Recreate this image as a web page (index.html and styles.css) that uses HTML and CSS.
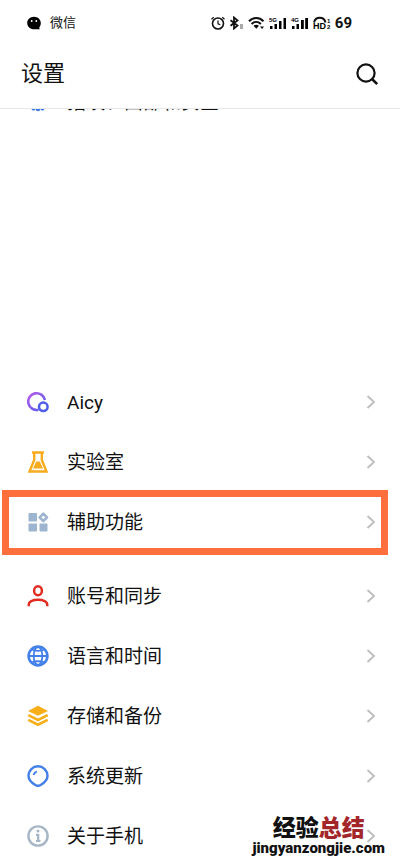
FILE: index.html
```html
<!DOCTYPE html>
<html lang="zh-CN">
<head>
<meta charset="utf-8">
<meta name="viewport" content="width=device-width, initial-scale=1">
<title>设置</title>
<link rel="stylesheet" href="styles.css">
</head>
<body>
<svg class="defs" aria-hidden="true">
  <symbol id="chevron" viewBox="0 0 10 14"><path d="M1.500 1l6.500 6-6.500 6" fill="none" stroke="#bdbdbd" stroke-width="1.800"/></symbol>
</svg>
<div class="status">
  <svg class="wechat" viewBox="0 0 14 14" aria-hidden="true"><path d="M7 .8C3.200.8.2 3.600.2 7c0 2 1 3.800 2.500 4.900C4 12.800 5.500 13.200 7 13.200h5.800l-.6-1.800C13.300 10.300 13.800 8.700 13.800 7 13.800 3.600 10.800.8 7 .8z"/><circle cx="4.700" cy="5" r=".9" fill="#fff"/><circle cx="9.300" cy="5" r=".9" fill="#fff"/></svg>
  <span class="app">微信</span>
  <div class="indicators">
    <svg width="14" height="14" viewBox="0 0 14 14" fill="none" stroke="#111" aria-hidden="true"><circle cx="7" cy="7.500" r="5.500" stroke-width="1.600"/><path d="M7 4.500v3.300l2.300.9M.5 3.200l2.200-2M13.500 3.200l-2.200-2" stroke-width="1.200"/></svg>
    <svg width="15" height="14" viewBox="0 0 15 14" fill="none" stroke="#111" aria-hidden="true"><path d="M1.500 4.200l7 5.400L5 12.500v-11l3.500 2.900-7 5.400" stroke-width="1.800"/><path d="M12.500 8v5" stroke="#aaa" stroke-width="3"/></svg>
    <svg width="17" height="14" viewBox="0 0 17 14" fill="none" stroke="#111" aria-hidden="true"><path d="M1 5.200c4.200-4.200 10.300-4.200 14.500 0M3.600 8c2.800-2.700 6.500-2.700 9.300 0" stroke-width="2"/><path d="M5.500 9.800c1.800-1.300 3.700-1.300 5.500 0l-2.700 3z" fill="#111" stroke="none"/><path d="M12 10.500h4l-2 2.500z" fill="#111" stroke="none"/></svg>
    <svg width="18" height="14" viewBox="0 0 18 14" aria-hidden="true"><path d="M1 10h2.500v3H1zM5.500 8H8v5H5.500zM10 5h2.500v8H10zM14.500 2H17v11h-2.500z"/><text class="net" x="0" y="6">5G</text></svg>
    <svg width="18" height="14" viewBox="0 0 18 14" aria-hidden="true"><path d="M1 10h2.500v3H1zM5.500 8H8v5H5.500zM10 4h2.800v9H10zM14.200 2H17v11h-2.800z"/><text class="net" x="0" y="6">4G</text></svg>
    <svg width="18" height="14" viewBox="0 0 18 14" aria-hidden="true"><path d="M1 6.500C2.500.3 11 .3 12.500 6.500" fill="none" stroke="#111" stroke-width="2"/><text class="hd" x="0" y="13">HD</text><text class="sim" x="14" y="7">1</text><text class="sim" x="14" y="13">2</text></svg>
    <span class="battery">69</span>
  </div>
</div>
<header class="header">
  <h1>设置</h1>
  <button class="search" aria-label="搜索"><svg viewBox="0 0 24 24" fill="none" stroke="#111" aria-hidden="true"><circle cx="11" cy="11" r="8.600" stroke-width="2.200"/><path d="M17 17l5.200 5.200" stroke-width="2.600"/></svg></button>
</header>
<main class="list">
  <a class="row clipped" href="#"><svg class="icon" viewBox="0 0 22 22" fill="#3d7bec" aria-hidden="true"><circle cx="11" cy="9" r="6"/><circle cx="6.500" cy="17.500" r="2"/><circle cx="11" cy="18" r="2.300"/><circle cx="15.500" cy="17.500" r="2"/></svg><span class="label">指纹、面部和安全</span></a>
  <section class="group spaced">
    <a class="row" href="#">
      <svg class="icon" viewBox="0 0 22 22" fill="none" aria-hidden="true"><defs><linearGradient id="aicy" x1="0" y1="0" x2="1" y2="1"><stop offset="0" stop-color="#b65be8"/><stop offset="1" stop-color="#5360ee"/></linearGradient></defs><path d="M17.900 9A8.400 8.400 0 1 0 11.500 18.800" stroke="url(#aicy)" stroke-width="2.600"/><circle cx="16.300" cy="15.800" r="4.300" stroke="#4d5dea" stroke-width="2.500"/></svg>
      <span class="label">Aicy</span><svg class="chevron" aria-hidden="true"><use href="#chevron"/></svg>
    </a>
    <a class="row" href="#">
      <svg class="icon" viewBox="0 0 22 22" aria-hidden="true"><path d="M5 1.500h12M7.200 2v7L2.500 20.500h17L14.800 9V2" fill="none" stroke="#f7ab1d" stroke-width="2.400"/><path d="M9.200 10.500h3.600L16 17.500H6z" fill="#f7ab1d"/></svg>
      <span class="label">实验室</span><svg class="chevron" aria-hidden="true"><use href="#chevron"/></svg>
    </a>
    <a class="row highlighted" href="#">
      <svg class="icon" viewBox="0 0 22 22" fill="#9eb5d0" aria-hidden="true"><rect x="1.500" y="2" width="8.500" height="8.500" rx=".8"/><rect x="1.500" y="12.500" width="8.500" height="8" rx=".8"/><rect x="12.500" y="12.500" width="8" height="8" rx=".8"/><path d="M16.300 2.600l3.700 3.700-3.700 3.700-3.700-3.700z" fill="none" stroke="#9eb5d0" stroke-width="2.600" stroke-linejoin="round"/></svg>
      <span class="label">辅助功能</span><svg class="chevron" aria-hidden="true"><use href="#chevron"/></svg>
    </a>
  </section>
  <section class="group">
    <a class="row" href="#">
      <svg class="icon" viewBox="0 0 22 22" fill="none" stroke="#e22b21" stroke-width="2.500" aria-hidden="true"><ellipse cx="11" cy="5.800" rx="3.900" ry="4.500"/><path d="M1.800 21.200v-1.700c0-2.700 3.700-4.700 9.200-4.700s9.200 2 9.200 4.700v1.700"/></svg>
      <span class="label">账号和同步</span><svg class="chevron" aria-hidden="true"><use href="#chevron"/></svg>
    </a>
    <a class="row" href="#">
      <svg class="icon" viewBox="0 0 22 22" fill="none" stroke="#4380e9" stroke-width="1.800" aria-hidden="true"><circle cx="11" cy="11" r="9.400" stroke-width="2.600"/><ellipse cx="11" cy="11" rx="4.300" ry="9"/><path d="M2 11h18M4.500 4.500c3.500 1.700 9.500 1.700 13 0M4.500 17.500c3.500-1.700 9.500-1.700 13 0"/></svg>
      <span class="label">语言和时间</span><svg class="chevron" aria-hidden="true"><use href="#chevron"/></svg>
    </a>
    <a class="row" href="#">
      <svg class="icon" viewBox="0 0 22 22" aria-hidden="true"><path d="M11 .8l10 5.200-10 4.700L1 6z" fill="#f8ae16"/><path d="M1.300 10.200L11 15l9.700-4.800M1.300 14.900L11 19.700l9.700-4.800" fill="none" stroke="#f8ae16" stroke-width="2.600"/></svg>
      <span class="label">存储和备份</span><svg class="chevron" aria-hidden="true"><use href="#chevron"/></svg>
    </a>
    <a class="row" href="#">
      <svg class="icon" viewBox="0 0 22 22" fill="none" stroke="#4380e9" stroke-width="2.400" aria-hidden="true"><path d="M11 1.300a9.500 9.500 0 0 1 9.500 9.400c0 4-3 7-6.900 9.300-1.800 1.100-3.400 1.100-5.200 0C4.500 17.700 1.500 14.700 1.500 10.700A9.500 9.500 0 0 1 11 1.300z"/><path d="M6.500 10c.7-1.800 1.700-2.800 3.300-3.600" stroke-width="2"/></svg>
      <span class="label">系统更新</span><svg class="chevron" aria-hidden="true"><use href="#chevron"/></svg>
    </a>
    <a class="row" href="#">
      <svg class="icon" viewBox="0 0 22 22" fill="none" stroke="#a6b6c6" aria-hidden="true"><circle cx="11" cy="11" r="9.600" stroke-width="2.400"/><path d="M11.200 9v7.300M9 9.800h2M9 16h4.500" stroke-width="2.200"/><circle cx="11" cy="6" r="1.500" fill="#a6b6c6" stroke="none"/></svg>
      <span class="label">关于手机</span><svg class="chevron" aria-hidden="true"><use href="#chevron"/></svg>
    </a>
  </section>
</main>
<div class="watermark">
  <div class="brand">经验<span class="red">总结</span></div>
  <div class="site">jingyanzongjie.com</div>
</div>
</body>
</html>
```
FILE: styles.css
```css
* { box-sizing: border-box; }

body {
  position: relative;
  margin: 0;
  min-height: 100vh;
  background: #fff;
  color: #111;
  font-family: Roboto, "Noto Sans CJK SC", sans-serif;
}

.defs { position: absolute; width: 0; height: 0; }

.status {
  display: flex;
  align-items: center;
  height: 45px;
  padding: 0 48px 0 27px;
  gap: 9px;
}

.wechat { width: 14px; height: 14px; }
.app { font-size: 13px; line-height: 20px; }

.indicators {
  display: flex;
  align-items: center;
  gap: 4px;
  margin-left: auto;
}

.battery { font-size: 15px; line-height: 20px; font-weight: 700; }
.net { font: 700 6px "Liberation Sans", sans-serif; }
.hd { font: 700 9px "Liberation Sans", sans-serif; }
.sim { font: 700 6px "Liberation Sans", sans-serif; }

.header {
  display: flex;
  align-items: center;
  justify-content: space-between;
  height: 64px;
  padding: 0 21px 6px;
  border-bottom: 1px solid #e8e8e8;
}

h1 { margin: 0; font-size: 22px; line-height: 32px; font-weight: 400; }

.search { padding: 0; border: 0; background: none; }
.search svg { display: block; width: 24px; height: 24px; }

.list { overflow: hidden; }

.row {
  position: relative;
  display: flex;
  align-items: center;
  height: 60px;
  padding: 0 24px 0 27px;
  gap: 18px;
  color: inherit;
  text-decoration: none;
}

.icon { flex: none; width: 22px; height: 22px; }
.label { flex: 1; padding-top: 2px; font-size: 19px; line-height: 28px; }
.chevron { flex: none; width: 10px; height: 14px; }

.clipped { margin-top: -37px; }
.spaced { margin-top: 240px; }
.group { margin-bottom: 14px; }
.group:last-child { margin-bottom: 0; }

.highlighted::after {
  content: "";
  position: absolute;
  inset: -2px 12px -3px 2px;
  border: 7px solid #ff6f3d;
}

.watermark {
  position: absolute;
  right: 15px;
  bottom: 10px;
  text-align: center;
}

.brand { font-size: 23px; line-height: 22px; font-weight: 900; }
.red { color: #a3262a; }
.site { font-size: 15px; line-height: 16px; font-weight: 900; }
```
